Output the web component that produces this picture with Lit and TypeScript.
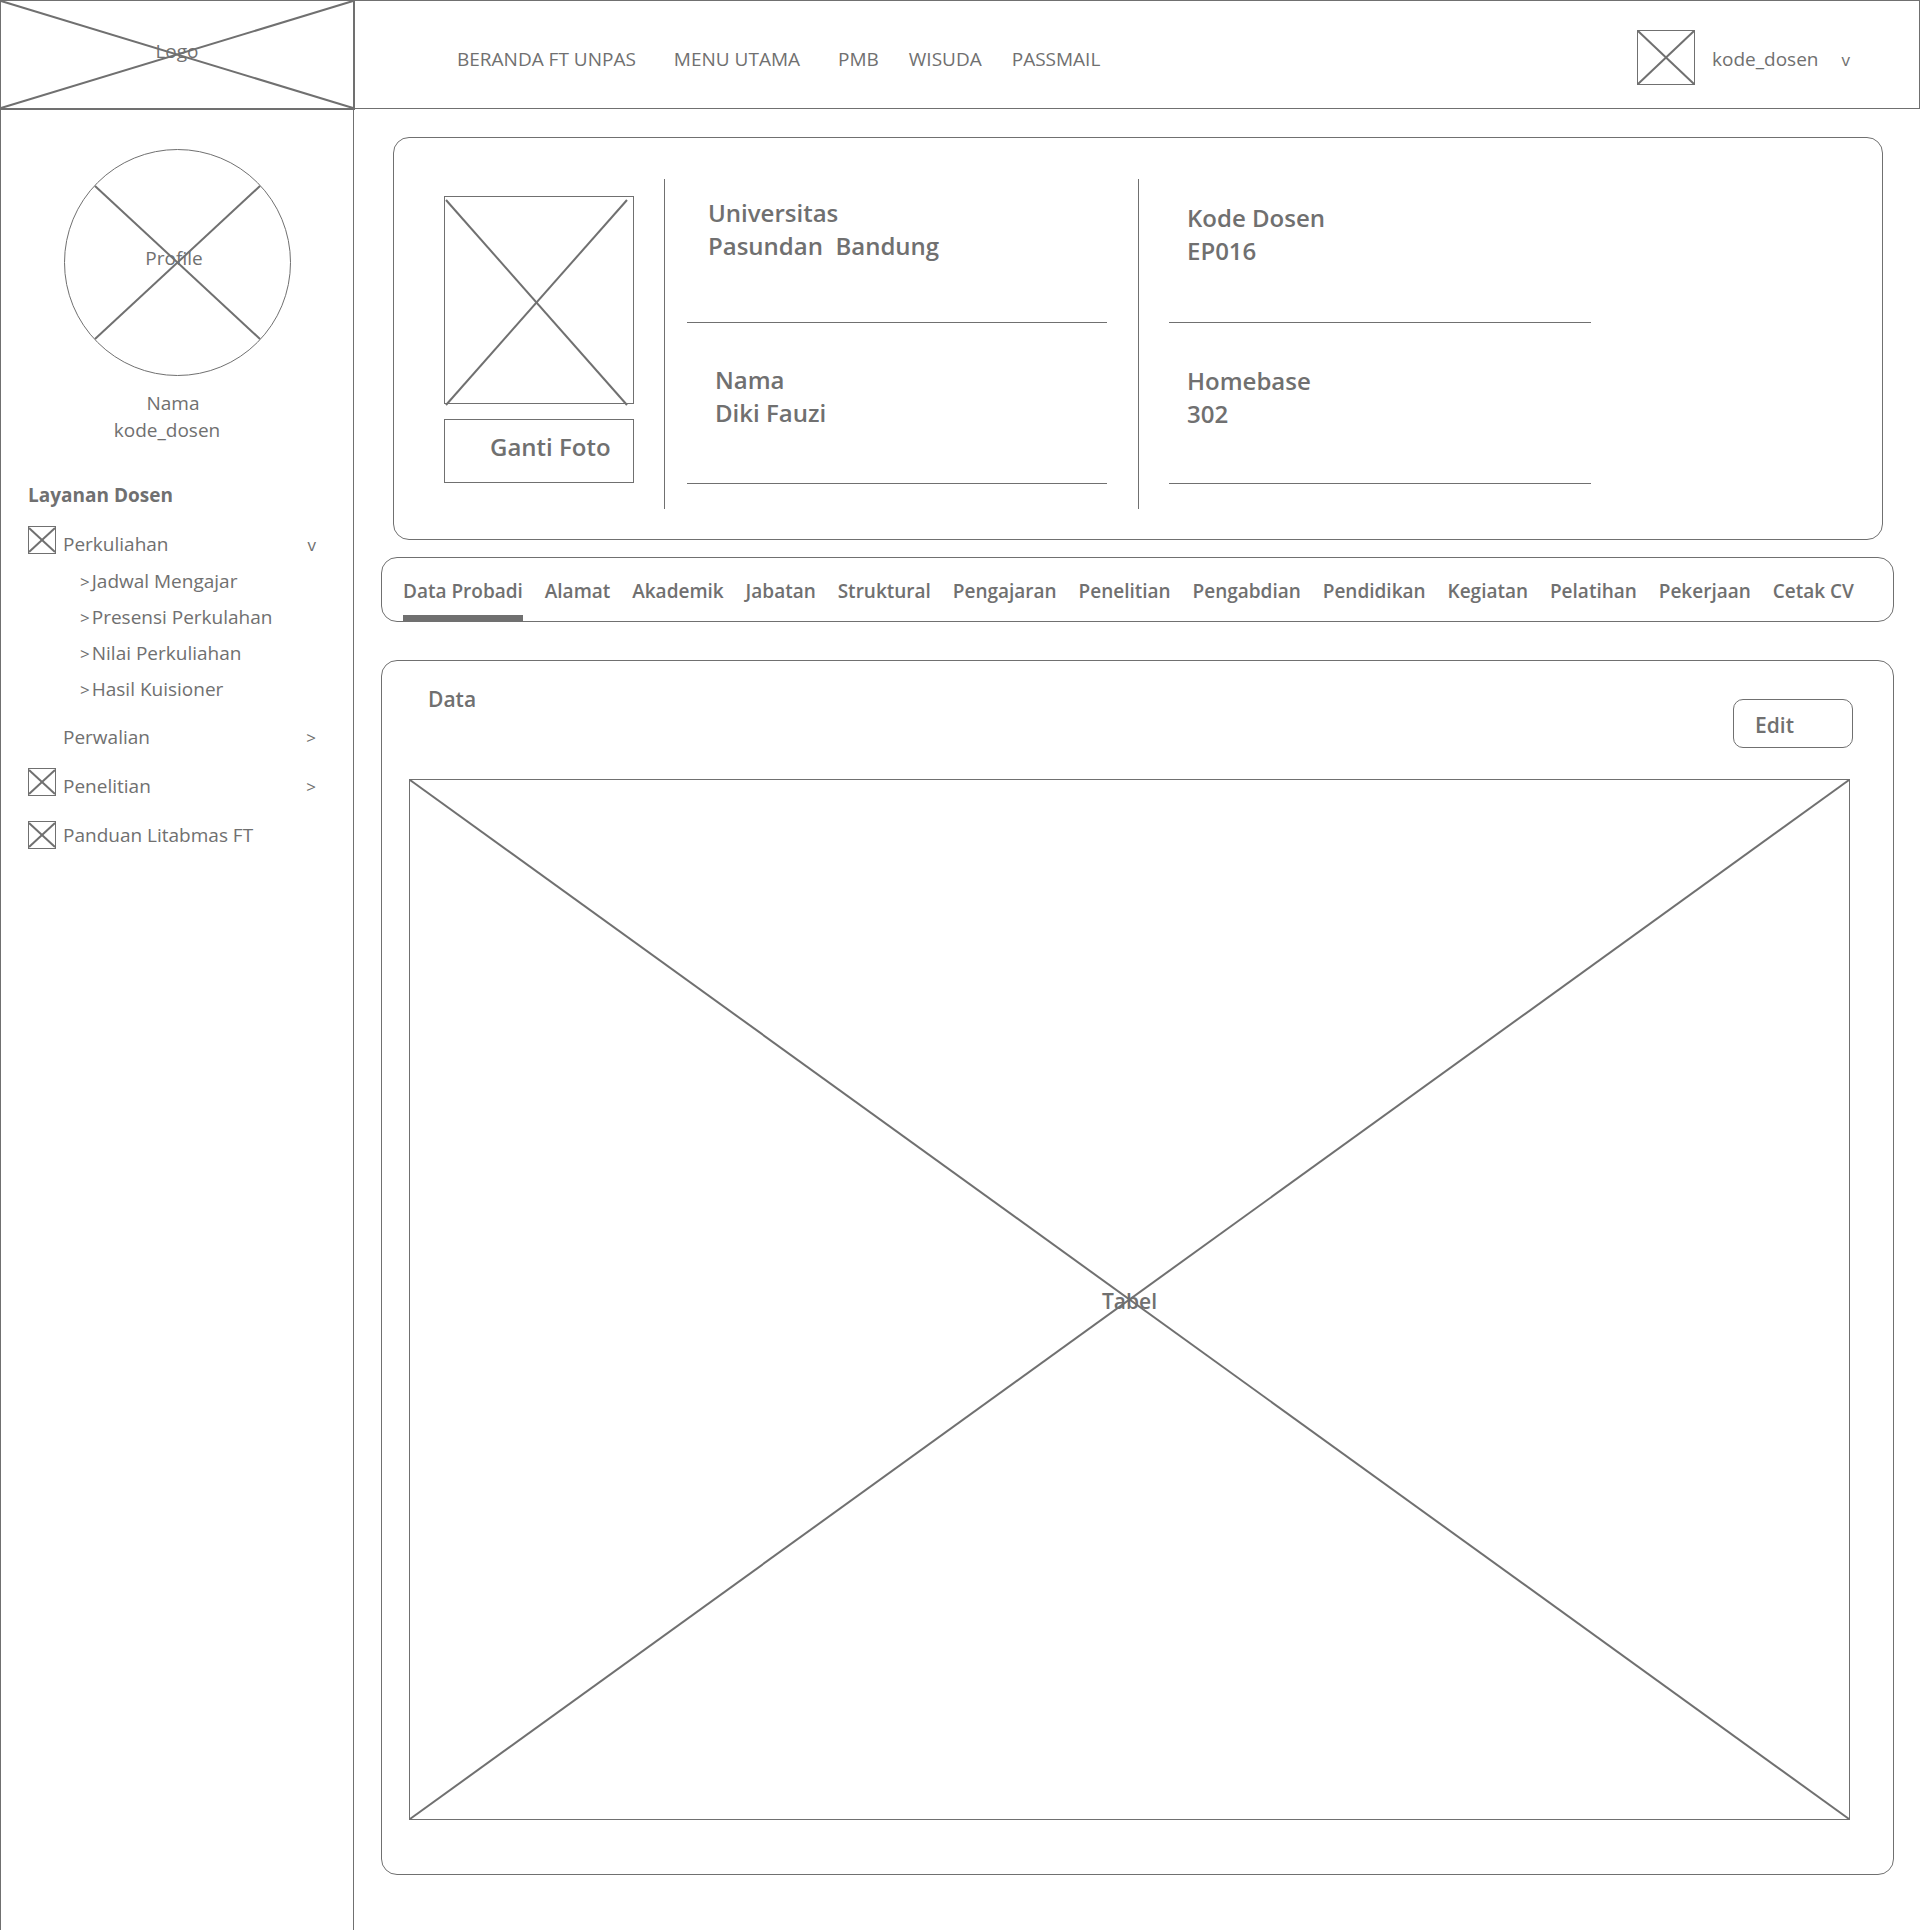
import { LitElement, html, css, nothing } from "lit";
import { customElement, property, state } from "lit/decorators.js";

interface MenuItem {
  label: string;
  icon: boolean;
  iconLow?: boolean;
  arrow?: string;
  children?: string[];
}

const NAV = [
  { label: "BERANDA FT UNPAS", wide: true },
  { label: "MENU UTAMA", wide: true },
  { label: "PMB", wide: false },
  { label: "WISUDA", wide: false },
  { label: "PASSMAIL", wide: false },
];

const MENU: MenuItem[] = [
  {
    label: "Perkuliahan",
    icon: true,
    arrow: "v",
    children: ["Jadwal Mengajar", "Presensi Perkulahan", "Nilai Perkuliahan", "Hasil Kuisioner"],
  },
  { label: "Perwalian", icon: false, arrow: ">" },
  { label: "Penelitian", icon: true, arrow: ">" },
  { label: "Panduan Litabmas FT", icon: true, iconLow: true },
];

const TABS = [
  "Data Probadi", "Alamat", "Akademik", "Jabatan", "Struktural", "Pengajaran", "Penelitian",
  "Pengabdian", "Pendidikan", "Kegiatan", "Pelatihan", "Pekerjaan", "Cetak CV",
];

/** Two diagonals stretched across the element: the usual image placeholder. */
@customElement("wire-cross")
export class WireCross extends LitElement {
  static styles = css`
    :host {
      display: block;
      pointer-events: none;
    }
    .lines {
      display: block;
      width: 100%;
      height: 100%;
      overflow: visible;
      stroke: #707070;
      stroke-width: 2;
    }
    .line {
      vector-effect: non-scaling-stroke;
    }
  `;

  render() {
    return html`<svg class="lines" viewBox="0 0 100 100" preserveAspectRatio="none" aria-hidden="true">
      <line class="line" x1="0" y1="0" x2="100" y2="100" />
      <line class="line" x1="0" y1="100" x2="100" y2="0" />
    </svg>`;
  }
}

@customElement("side-menu")
export class SideMenu extends LitElement {
  @property({ attribute: false }) items: MenuItem[] = [];

  static styles = css`
    :host {
      display: block;
    }
    .list,
    .sub {
      list-style: none;
      margin: 0;
      padding: 0;
    }
    .list {
      display: flex;
      flex-direction: column;
      gap: 17px;
    }
    .row {
      display: flex;
      align-items: flex-start;
      gap: 7px;
      width: 100%;
      padding: 0;
      border: 0;
      background: none;
      color: inherit;
      font: inherit;
      text-align: left;
      text-decoration: none;
      cursor: pointer;
    }
    .icon {
      flex: none;
      box-sizing: border-box;
      width: 28px;
      height: 28px;
      padding: 1px 0;
      border: 1px solid #707070;
    }
    .icon.low {
      align-self: flex-end;
    }
    .blank {
      flex: none;
      width: 28px;
    }
    .text {
      display: flex;
      flex: 1;
      align-items: baseline;
      justify-content: space-between;
      height: 27px;
    }
    .has-icon .text {
      margin-top: 5px;
    }
    .arrow {
      font-size: 17px;
    }
    .sub {
      margin-top: 5px;
      padding-left: 52px;
      line-height: 36px;
    }
    .link {
      display: flex;
      align-items: baseline;
      gap: 2px;
      height: 36px;
      color: inherit;
      text-decoration: none;
    }
  `;

  private renderRow(item: MenuItem) {
    const inner = html`
      ${item.icon
        ? html`<wire-cross class="icon ${item.iconLow ? "low" : ""}"></wire-cross>`
        : html`<span class="blank"></span>`}
      <span class="text">
        <span>${item.label}</span>
        ${item.arrow ? html`<span class="arrow">${item.arrow}</span>` : nothing}
      </span>
    `;
    const cls = `row ${item.icon ? "has-icon" : ""}`;
    return item.arrow
      ? html`<button class=${cls} type="button" aria-expanded=${item.children ? "true" : "false"}>${inner}</button>`
      : html`<a class=${cls} href="#">${inner}</a>`;
  }

  render() {
    return html`<ul class="list">
      ${this.items.map(
        (item) => html`<li>
          ${this.renderRow(item)}
          ${item.children
            ? html`<ul class="sub">
                ${item.children.map(
                  (c) => html`<li><a class="link" href="#"><span class="arrow">></span><span>${c}</span></a></li>`
                )}
              </ul>`
            : nothing}
        </li>`
      )}
    </ul>`;
  }
}

@customElement("app-root")
export class AppRoot extends LitElement {
  @state() private active = 0;

  static styles = css`
    :host {
      display: flex;
      flex-direction: column;
      min-height: 100vh;
      background: #fff;
      color: #707070;
      font-family: "Segoe UI", "Open Sans", "Noto Sans", sans-serif;
      font-size: 19px;
      line-height: 27px;
    }
    * {
      box-sizing: border-box;
    }
    button {
      margin: 0;
      padding: 0;
      border: 0;
      background: none;
      color: inherit;
      font: inherit;
      cursor: pointer;
    }
    a {
      color: inherit;
      text-decoration: none;
    }
    .overlay {
      position: absolute;
      inset: 0;
    }

    .header {
      display: flex;
      height: 109px;
      border: 1px solid #707070;
    }
    .logo {
      position: relative;
      display: flex;
      flex: none;
      align-items: center;
      justify-content: center;
      width: 355px;
      margin: -1px 0 -2px -1px;
      padding-bottom: 7px;
      border: solid #707070;
      border-width: 1px 2px 2px 1px;
    }
    .bar {
      display: flex;
      flex: 1;
      align-items: center;
      justify-content: space-between;
      padding: 9px 69px 0 102px;
    }
    .nav {
      display: flex;
      gap: 30px;
    }
    .wide {
      margin-right: 8px;
    }
    .user {
      display: flex;
      align-items: center;
    }
    .avatar {
      width: 58px;
      height: 55px;
      margin: 0 17px 3px 0;
      border: 1px solid #707070;
    }
    .account {
      display: flex;
      align-items: baseline;
      gap: 23px;
      height: 27px;
    }
    .caret {
      font-size: 17px;
    }

    .body {
      display: flex;
      flex: 1;
    }
    .sidebar {
      flex: none;
      width: 354px;
      padding: 40px 37px 0 27px;
      border: solid #707070;
      border-width: 0 1px;
    }
    .profile {
      display: flex;
      flex-direction: column;
      align-items: center;
      margin-right: -10px;
    }
    .circle {
      position: relative;
      display: flex;
      align-items: center;
      justify-content: center;
      width: 227px;
      height: 227px;
      padding: 0 6px 8px 0;
      border: 1px solid #707070;
      border-radius: 50%;
    }
    .circle-cross {
      position: absolute;
      inset: 36px 30px;
    }
    .who {
      margin-top: 14px;
      padding-right: 20px;
      text-align: center;
    }
    .who-name {
      padding-left: 12px;
    }
    .section {
      margin: 38px 0 17px;
      font-size: 19px;
      font-weight: 700;
    }

    .main {
      display: flex;
      flex: 1;
      flex-direction: column;
      min-width: 0;
      padding: 28px 26px 55px 27px;
    }
    .card {
      border: 1px solid #707070;
      border-radius: 16px;
    }
    .bio {
      display: flex;
      gap: 30px;
      margin: 0 11px 0 12px;
      padding: 41px 0 30px 50px;
      font-size: 24px;
      font-weight: 600;
      line-height: 33px;
    }
    .photo-col {
      flex: none;
      width: 190px;
      padding-top: 17px;
    }
    .photo {
      position: relative;
      height: 208px;
      border: 1px solid #707070;
    }
    .photo-cross {
      position: absolute;
      inset: 3px 6px -2px 1px;
    }
    .change {
      width: 100%;
      height: 64px;
      margin-top: 15px;
      padding: 0 0 9px 45px;
      border: 1px solid #707070;
      text-align: left;
    }
    .facts {
      display: grid;
      flex: 1;
      grid-template-columns: 474fr 453fr 291fr;
      margin: 0;
    }
    .col {
      padding: 0 0 25px 30px;
      border-left: 1px solid #707070;
    }
    .col.first {
      padding: 0 31px 25px 22px;
    }
    .fact {
      height: 144px;
      padding: 22px 0 0 18px;
      border-bottom: 1px solid #707070;
    }
    .fact.next {
      height: 161px;
      padding-top: 41px;
    }
    .first .fact {
      padding: 17px 0 0 21px;
    }
    .first .fact.next {
      padding: 40px 0 0 28px;
    }
    .value {
      margin: 0;
      white-space: pre;
    }

    .tabs {
      display: flex;
      justify-content: space-between;
      margin-top: 17px;
      padding: 0 39px 0 21px;
      font-weight: 600;
    }
    .tab {
      padding: 20px 0 10px;
      border-bottom: 6px solid transparent;
      white-space: nowrap;
    }
    .tab.active {
      border-color: #707070;
    }

    .data {
      display: flex;
      flex: 1;
      flex-direction: column;
      margin-top: 38px;
      padding: 0 43px 54px 27px;
      font-size: 21px;
      font-weight: 600;
      line-height: 28px;
    }
    .data-head {
      display: flex;
      align-items: flex-start;
      justify-content: space-between;
      margin: 0 -3px 31px 19px;
    }
    .title {
      margin: 24px 0 0;
      font-size: 21px;
      font-weight: 600;
    }
    .edit {
      width: 120px;
      height: 49px;
      margin-top: 38px;
      padding: 2px 0 0 21px;
      border: 1px solid #707070;
      border-radius: 10px;
      text-align: left;
    }
    .placeholder {
      position: relative;
      display: flex;
      flex: 1;
      align-items: center;
      justify-content: center;
      min-height: 400px;
      padding-top: 2px;
      border: 1px solid #707070;
    }
  `;

  render() {
    return html`
      <header class="header">
        <div class="logo"><span>Logo</span><wire-cross class="overlay"></wire-cross></div>
        <div class="bar">
          <nav class="nav">
            ${NAV.map((n) => html`<a class=${n.wide ? "wide" : ""} href="#">${n.label}</a>`)}
          </nav>
          <button class="user" type="button">
            <wire-cross class="avatar"></wire-cross>
            <span class="account"><span>kode_dosen</span><span class="caret">v</span></span>
          </button>
        </div>
      </header>
      <div class="body">
        <aside class="sidebar">
          <div class="profile">
            <div class="circle"><span>Profile</span><wire-cross class="circle-cross"></wire-cross></div>
            <div class="who">
              <div class="who-name">Nama</div>
              <div>kode_dosen</div>
            </div>
          </div>
          <h2 class="section">Layanan Dosen</h2>
          <side-menu .items=${MENU}></side-menu>
        </aside>
        <main class="main">
          <section class="card bio">
            <div class="photo-col">
              <div class="photo"><wire-cross class="photo-cross"></wire-cross></div>
              <button class="change" type="button">Ganti Foto</button>
            </div>
            <div class="facts">
              <div class="col first">
                <div class="fact"><div>Universitas</div><div class="value">Pasundan  Bandung</div></div>
                <div class="fact next"><div>Nama</div><div class="value">Diki Fauzi</div></div>
              </div>
              <div class="col">
                <div class="fact"><div>Kode Dosen</div><div class="value">EP016</div></div>
                <div class="fact next"><div>Homebase</div><div class="value">302</div></div>
              </div>
            </div>
          </section>
          <div class="card tabs" role="tablist">
            ${TABS.map(
              (t, i) => html`<button
                class="tab ${i === this.active ? "active" : ""}"
                type="button"
                role="tab"
                aria-selected=${i === this.active ? "true" : "false"}
                @click=${() => (this.active = i)}
              >${t}</button>`
            )}
          </div>
          <section class="card data">
            <div class="data-head">
              <h2 class="title">Data</h2>
              <button class="edit" type="button">Edit</button>
            </div>
            <div class="placeholder"><span>Tabel</span><wire-cross class="overlay"></wire-cross></div>
          </section>
        </main>
      </div>
    `;
  }
}
